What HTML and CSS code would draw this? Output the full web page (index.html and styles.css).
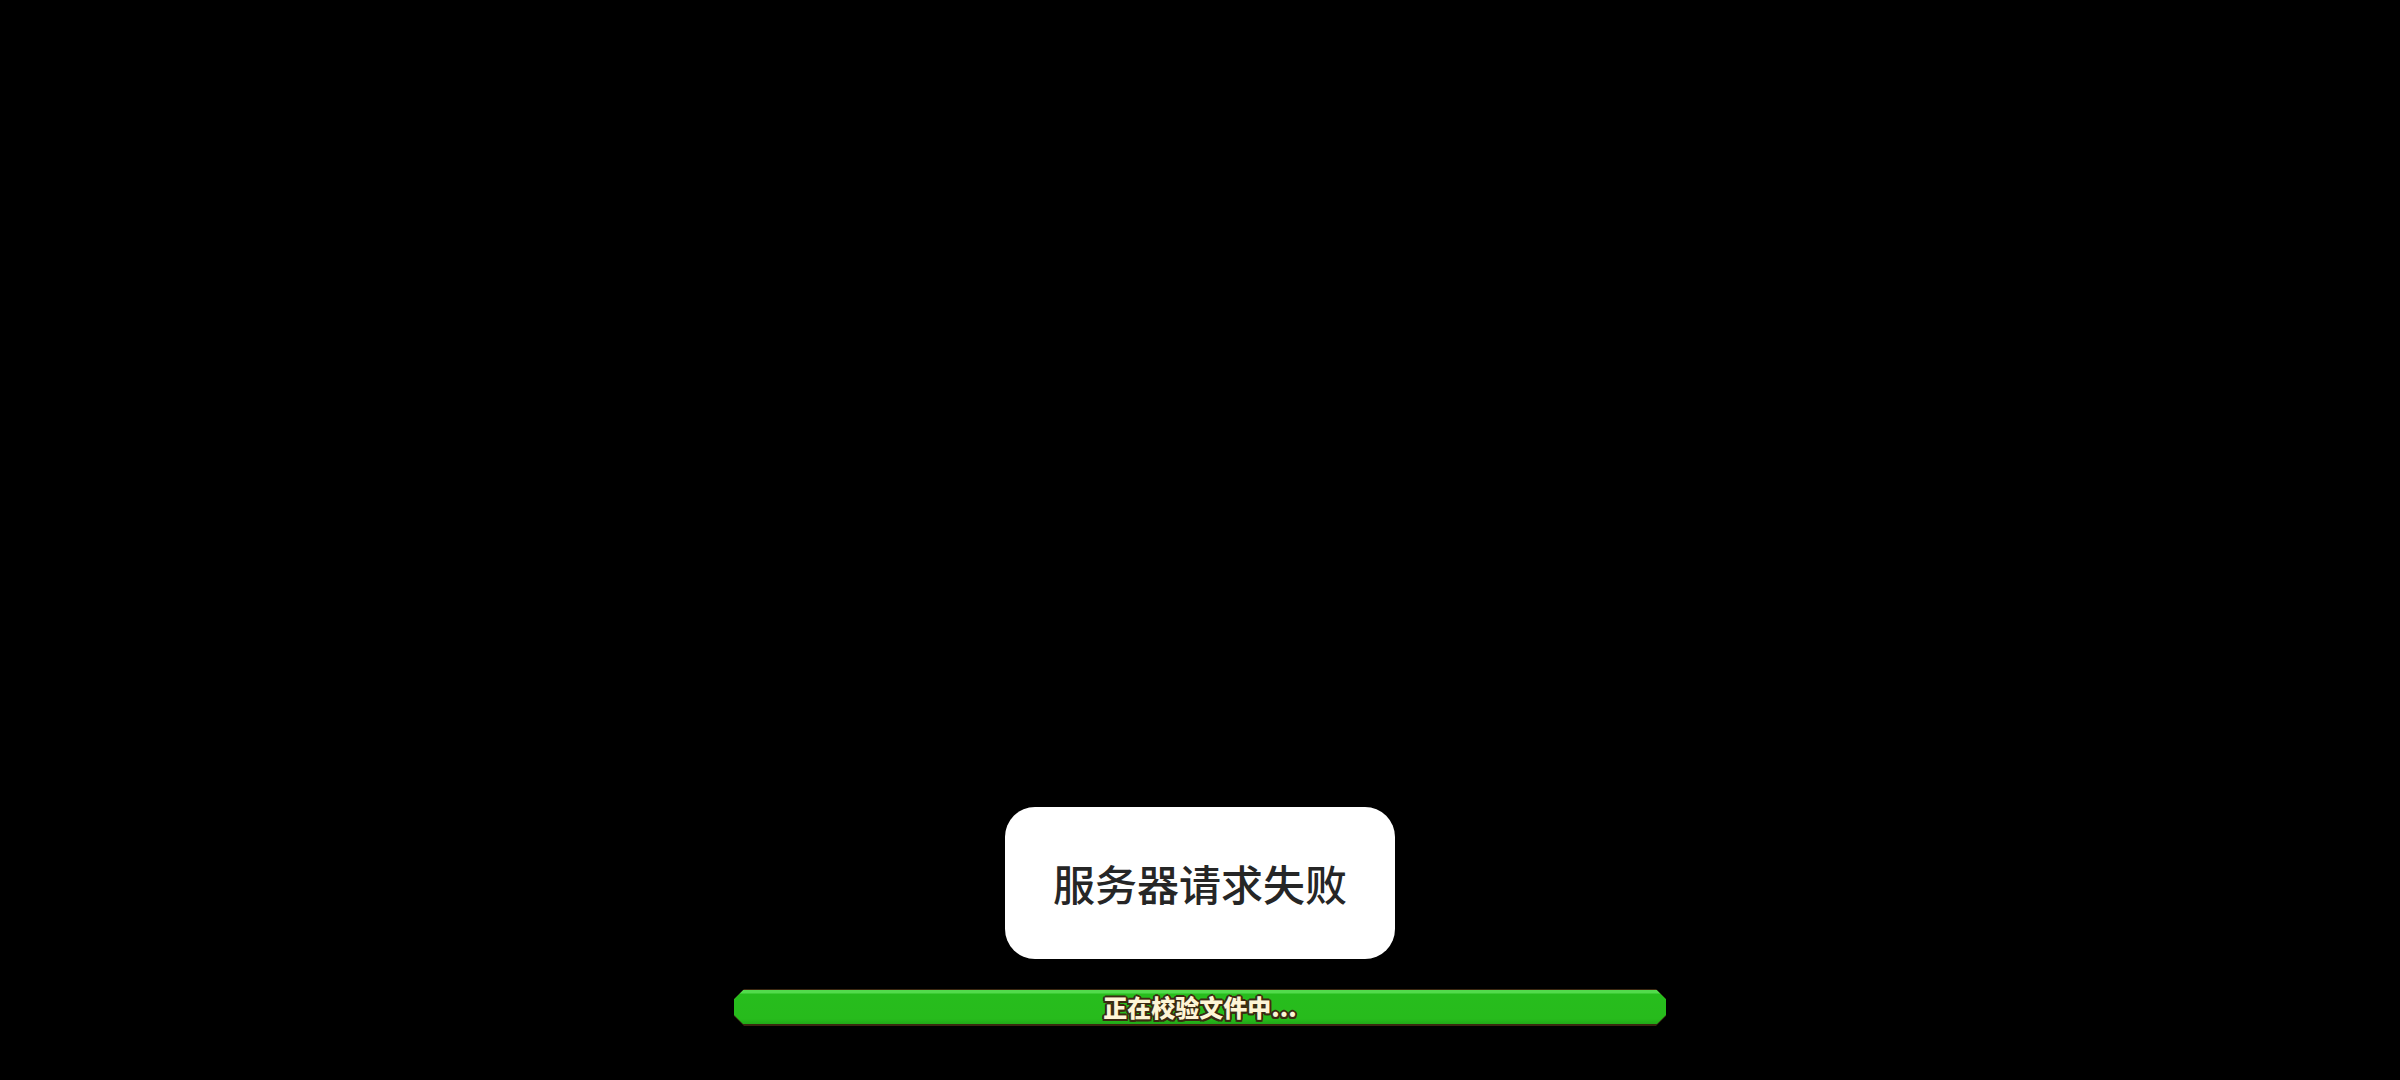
FILE: index.html
```html
<!DOCTYPE html>
<html lang="zh">
<head>
<meta charset="utf-8">
<title>服务器请求失败</title>
<link rel="stylesheet" href="styles.css">
</head>
<body>
<main class="screen">
  <div class="toast">服务器请求失败</div>
  <div class="bar">
    <div class="bar-fill">
      <span class="bar-label">正在校验文件中...</span>
    </div>
  </div>
</main>
</body>
</html>
```
FILE: styles.css
```css
html, body {
  margin: 0;
  padding: 0;
  background: #000;
}
.screen {
  width: 2400px;
  height: 1080px;
  display: flex;
  flex-direction: column;
  align-items: center;
  justify-content: flex-end;
  padding-bottom: 54px;
  box-sizing: border-box;
}
.toast {
  width: 390px;
  height: 152px;
  margin-bottom: 30px;
  background: #fff;
  border-radius: 30px;
  display: flex;
  align-items: center;
  justify-content: center;
  font-family: "Noto Sans CJK SC", "Noto Sans", sans-serif;
  font-weight: 500;
  font-size: 42px;
  color: #262626;
  padding-bottom: 2px;
  box-sizing: border-box;
}
.bar {
  width: 932px;
  height: 37px;
  background: #3a2610;
  padding: 1px 0 2px;
  box-sizing: border-box;
  clip-path: polygon(10px 0, calc(100% - 10px) 0, 100% 10px, 100% calc(100% - 10px), calc(100% - 10px) 100%, 10px 100%, 0 calc(100% - 10px), 0 10px);
}
.bar-fill {
  height: 100%;
  background: linear-gradient(to bottom, #52db4c 0, #52db4c 3px, #27bd1d 4px, #27bb1c 85%, #21a818 100%);
  clip-path: polygon(9px 0, calc(100% - 9px) 0, 100% 9px, 100% calc(100% - 9px), calc(100% - 9px) 100%, 9px 100%, 0 calc(100% - 9px), 0 9px);
  display: flex;
  align-items: center;
  justify-content: center;
}
.bar-label {
  font-family: "Noto Sans CJK SC", "Noto Sans", sans-serif;
  font-weight: 900;
  font-size: 24px;
  line-height: 1;
  color: #fdf5d6;
  text-shadow:
    -1.5px -1.5px 0 #3b2a12, 1.5px -1.5px 0 #3b2a12,
    -1.5px 1.5px 0 #3b2a12, 1.5px 1.5px 0 #3b2a12,
    0 2px 0 #3b2a12, 0 -2px 0 #3b2a12, 2px 0 0 #3b2a12, -2px 0 0 #3b2a12;
}
```
